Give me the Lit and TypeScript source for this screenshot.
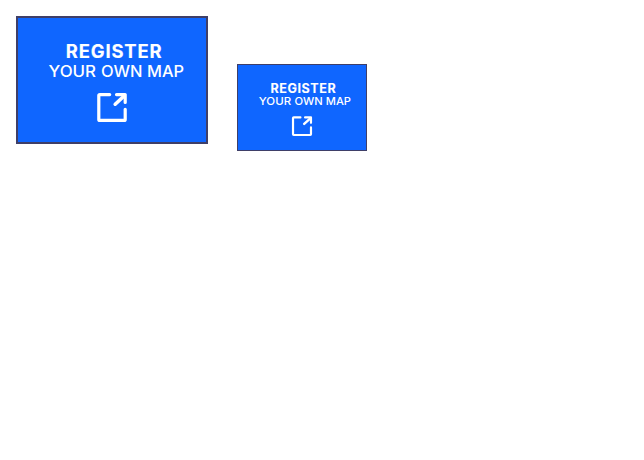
import { LitElement, html, css } from "lit";

class MapCard extends LitElement {
  static styles = css`
    :host { display: block; box-sizing: border-box; background: #0f66ff; color: #fff; font-family: "Inter", sans-serif; }
    :host([size="large"]) { width: 192px; height: 128px; border: 2px solid #3f3f68; }
    :host([size="small"]) { width: 130px; height: 87px; border: 1px solid #3f3f68; }
    svg { display: block; width: 100%; height: 100%; overflow: visible; }
    .label { fill: #fff; }
    .title { font-size: 18.4px; font-weight: 700; stroke: #fff; stroke-width: 0.15; }
    .sub { font-size: 15.8px; font-weight: 500; }
    .icon { fill: none; stroke: #fff; stroke-width: 3.2; stroke-linecap: round; stroke-linejoin: round; }
    .shaft { stroke-width: 3.6; }
  `;
  render() {
    return html`<svg viewBox="2 2 188 124">
      <text class="label title" x="49.800" y="42" textLength="95.700" lengthAdjust="spacing">REGISTER</text>
      <text class="label sub" y="61"><tspan x="32.500" textLength="47.500" lengthAdjust="spacingAndGlyphs">YOUR</tspan> <tspan x="85" textLength="41.500" lengthAdjust="spacingAndGlyphs">OWN</tspan> <tspan x="131" textLength="37" lengthAdjust="spacingAndGlyphs">MAP</tspan></text>
      <path class="icon" d="M93.700 78.600H83.800Q82.800 78.600 82.800 79.600V103.400Q82.800 104.400 83.800 104.400H108.200Q109.200 104.400 109.200 103.400V93.300M100.500 78.600H109.200V86.500"/>
      <path class="icon shaft" d="M99.200 88.200L107.800 80.200"/>
    </svg>`;
  }
}
customElements.define("map-card", MapCard);

class AppRoot extends LitElement {
  static styles = css`
    :host { display: block; height: 460px; box-sizing: border-box; padding: 16px; background: #fff; }
    .row { display: flex; align-items: flex-start; gap: 29px; }
    .lower { margin-top: 48px; }
  `;
  render() {
    return html`<div class="row"><map-card size="large"></map-card><map-card class="lower" size="small"></map-card></div>`;
  }
}
customElements.define("app-root", AppRoot);
